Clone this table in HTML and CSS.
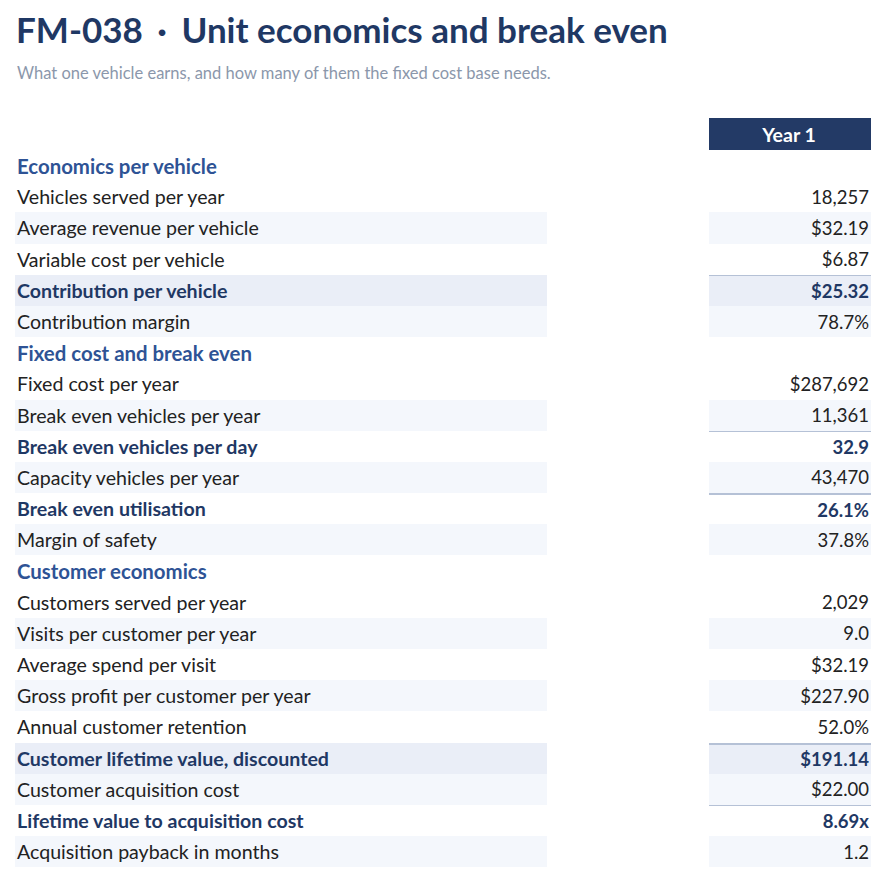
FILE: index.html
```html
<!DOCTYPE html>
<html lang="en">
<head>
<meta charset="utf-8">
<title>FM-038 · Unit economics and break even</title>
<link rel="stylesheet" href="styles.css">
</head>
<body>
<main class="page">
  <h1 class="title">FM-038 <span class="dot">·</span> Unit economics and break even</h1>
  <p class="subtitle">What one vehicle earns, and how many of them the fixed cost base needs.</p>

  <div class="sheet">
    <div class="row head"><div class="label"></div><div class="gap"></div><div class="value">Year 1</div></div>

    <div class="row section"><div class="label">Economics per vehicle</div><div class="gap"></div><div class="value"></div></div>
    <div class="row"><div class="label">Vehicles served per year</div><div class="gap"></div><div class="value">18,257</div></div>
    <div class="row stripe"><div class="label">Average revenue per vehicle</div><div class="gap"></div><div class="value">$32.19</div></div>
    <div class="row"><div class="label">Variable cost per vehicle</div><div class="gap"></div><div class="value">$6.87</div></div>
    <div class="row total hl"><div class="label">Contribution per vehicle</div><div class="gap"></div><div class="value rule">$25.32</div></div>
    <div class="row stripe"><div class="label">Contribution margin</div><div class="gap"></div><div class="value">78.7%</div></div>

    <div class="row section"><div class="label">Fixed cost and break even</div><div class="gap"></div><div class="value"></div></div>
    <div class="row"><div class="label">Fixed cost per year</div><div class="gap"></div><div class="value">$287,692</div></div>
    <div class="row stripe"><div class="label">Break even vehicles per year</div><div class="gap"></div><div class="value">11,361</div></div>
    <div class="row total"><div class="label">Break even vehicles per day</div><div class="gap"></div><div class="value rule">32.9</div></div>
    <div class="row stripe"><div class="label">Capacity vehicles per year</div><div class="gap"></div><div class="value">43,470</div></div>
    <div class="row total"><div class="label">Break even utilisation</div><div class="gap"></div><div class="value rule2">26.1%</div></div>
    <div class="row stripe"><div class="label">Margin of safety</div><div class="gap"></div><div class="value">37.8%</div></div>

    <div class="row section"><div class="label">Customer economics</div><div class="gap"></div><div class="value"></div></div>
    <div class="row"><div class="label">Customers served per year</div><div class="gap"></div><div class="value">2,029</div></div>
    <div class="row stripe"><div class="label">Visits per customer per year</div><div class="gap"></div><div class="value">9.0</div></div>
    <div class="row"><div class="label">Average spend per visit</div><div class="gap"></div><div class="value">$32.19</div></div>
    <div class="row stripe"><div class="label">Gross profit per customer per year</div><div class="gap"></div><div class="value">$227.90</div></div>
    <div class="row"><div class="label">Annual customer retention</div><div class="gap"></div><div class="value">52.0%</div></div>
    <div class="row total hl"><div class="label">Customer lifetime value, discounted</div><div class="gap"></div><div class="value rule2">$191.14</div></div>
    <div class="row stripe"><div class="label">Customer acquisition cost</div><div class="gap"></div><div class="value">$22.00</div></div>
    <div class="row total"><div class="label">Lifetime value to acquisition cost</div><div class="gap"></div><div class="value rule">8.69x</div></div>
    <div class="row stripe"><div class="label">Acquisition payback in months</div><div class="gap"></div><div class="value">1.2</div></div>
  </div>
</main>
</body>
</html>
```

FILE: styles.css
```css
html, body {
  margin: 0;
  padding: 0;
  background: #ffffff;
}

body {
  font-family: Lato, "Noto Sans", "Liberation Sans", sans-serif;
  color: #222222;
}

.page {
  padding: 9px 16px 0 15px;
}

.title {
  margin: 0;
  font-size: 35px;
  font-weight: 700;
  line-height: 41px;
  color: #1f3864;
  padding-left: 1px;
}

.title .dot {
  margin: 0 6px;
}

.subtitle {
  margin: 13px 0 0 0;
  padding-left: 2px;
  font-size: 16.5px;
  line-height: 20px;
  color: #8b97ab;
}

.sheet {
  margin-top: 35px;
}

.row {
  display: grid;
  grid-template-columns: 532px 162px 162px;
  height: 31.2px;
  font-size: 19.6px;
}

.row > div {
  box-sizing: border-box;
  display: flex;
  align-items: center;
  height: 100%;
}

.label {
  padding-left: 2px;
}

.value {
  justify-content: flex-end;
  padding-right: 2px;
  font-size: 18.5px;
}

.head {
  height: 32px;
}

.head .value {
  justify-content: center;
  background: #233a66;
  color: #ffffff;
  font-weight: 700;
  font-size: 19.5px;
}

.section .label {
  font-weight: 700;
  font-size: 20.4px;
  color: #2e5395;
}

.stripe .label,
.stripe .value {
  background: #f4f7fc;
}

.hl .label,
.hl .value {
  background: #eaeef7;
}

.total .label,
.total .value {
  font-weight: 700;
  color: #1f3864;
}

.value.rule {
  border-top: 1px solid #b5c1d6;
}

.value.rule2 {
  border-top: 2px solid #b5c1d6;
}
```
